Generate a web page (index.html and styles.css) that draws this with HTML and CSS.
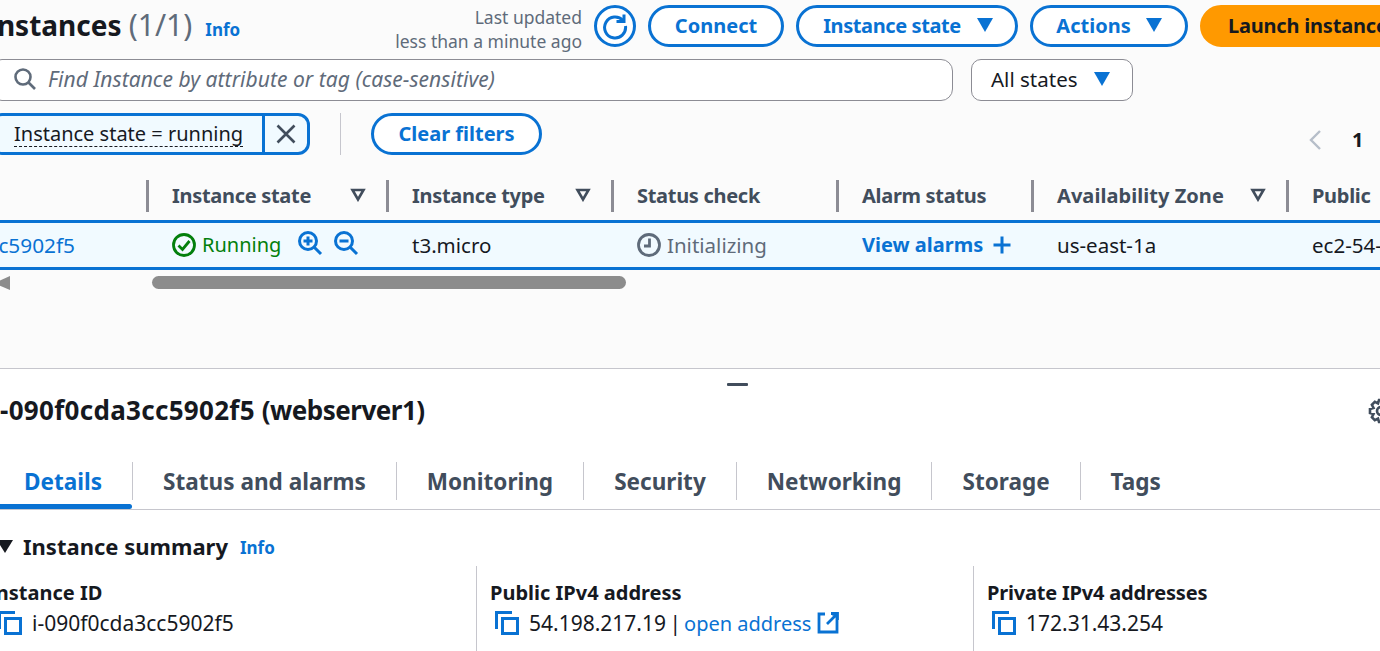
FILE: index.html
```html
<!DOCTYPE html>
<html lang="en">
<head>
<title>Instances</title>
<meta charset="utf-8">
<link rel="stylesheet" href="styles.css">
</head>
<body>
<div class="top">
    <div class="head">
        <h1 class="title">Instances <span class="count">(1/1)</span></h1>
        <a class="info info-head">Info</a>
        <div class="updated">Last updated<br>less than a minute ago</div>
        <button class="btn btn-icon">
            <svg width="28" height="28" viewBox="0 0 28 28" fill="none" stroke="#0972d3" stroke-width="3"><path d="M22 8.5A10.5 10.5 0 1 0 24.5 14"/><path d="M15.5 9.5H23V2.5" stroke-width="3"/></svg>
        </button>
        <button class="btn btn-connect">Connect</button>
        <button class="btn btn-state">Instance state <i class="caret"></i></button>
        <button class="btn btn-actions">Actions <i class="caret"></i></button>
        <button class="btn btn-launch">Launch instances</button>
    </div>

    <div class="search-row">
        <div class="search">
            <svg width="24" height="24" viewBox="0 0 24 24" fill="none" stroke="#5f6b7a" stroke-width="2.6"><circle cx="10" cy="10" r="7.5"/><path d="M15.5 15.5L22 22"/></svg>
            <span>Find Instance by attribute or tag (case-sensitive)</span>
        </div>
        <div class="select">All states <i class="caret"></i></div>
    </div>

    <div class="filter-row">
        <div class="token">
            <span class="token-text"><span class="dashed">Instance state = running</span></span>
            <span class="token-x">
                <svg width="20" height="20" viewBox="0 0 20 20" fill="none" stroke="#414d5c" stroke-width="2.6"><path d="M1.5 1.5L18.5 18.5M18.5 1.5L1.5 18.5"/></svg>
            </span>
        </div>
        <span class="vline"></span>
        <button class="btn btn-clear">Clear filters</button>
        <div class="pager">
            <svg width="14" height="20" viewBox="0 0 14 20" fill="none" stroke="#b6bec9" stroke-width="2.4"><path d="M12 1L3 10L12 19"/></svg>
            <b>1</b>
        </div>
    </div>

    <div class="grid thead">
        <div class="th"></div>
        <div class="th">Instance state
            <svg class="sort" width="16" height="14" viewBox="0 0 16 14" fill="none" stroke="#414d5c" stroke-width="2.6"><path d="M2.500 2H13.500L8 11.500Z"/></svg>
        </div>
        <div class="th">Instance type
            <svg class="sort" width="16" height="14" viewBox="0 0 16 14" fill="none" stroke="#414d5c" stroke-width="2.6"><path d="M2.500 2H13.500L8 11.500Z"/></svg>
        </div>
        <div class="th">Status check</div>
        <div class="th">Alarm status</div>
        <div class="th th-zone">Availability Zone
            <svg class="sort" width="16" height="14" viewBox="0 0 16 14" fill="none" stroke="#414d5c" stroke-width="2.6"><path d="M2.500 2H13.500L8 11.500Z"/></svg>
        </div>
        <div class="th">Public</div>
    </div>
    <div class="grid tr">
        <div class="td td-id"><a>i-090f0cda3cc5902f5</a></div>
        <div class="td running">
            <svg width="24" height="24" viewBox="0 0 24 24" fill="none" stroke="#037f0c" stroke-width="2.800"><circle cx="12" cy="12" r="10.500"/><path d="M6.500 12.500L10.500 16.500L17.500 8"/></svg>
            <span>Running</span>
            <svg class="zoom-in" width="26" height="26" viewBox="0 0 26 26" fill="none" stroke="#0972d3" stroke-width="3"><circle cx="11" cy="11" r="8.500"/><path d="M17.500 17.500L24 24M11 6.500V15.500M6.500 11H15.500"/></svg>
            <svg class="zoom-out" width="26" height="26" viewBox="0 0 26 26" fill="none" stroke="#0972d3" stroke-width="3"><circle cx="11" cy="11" r="8.500"/><path d="M17.500 17.500L24 24M6.500 11H15.500"/></svg>
        </div>
        <div class="td">t3.micro</div>
        <div class="td init">
            <svg width="24" height="24" viewBox="0 0 24 24" fill="none" stroke="#5f6b7a" stroke-width="2.800"><circle cx="12" cy="12" r="10.500"/><path d="M12.500 5.500V13H7"/></svg>
            <span>Initializing</span>
        </div>
        <div class="td alarms">View alarms
            <svg width="20" height="20" viewBox="0 0 20 20" fill="none" stroke="#0972d3" stroke-width="3"><path d="M10 1.500V18.500M1.500 10H18.500"/></svg>
        </div>
        <div class="td">us-east-1a</div>
        <div class="td">ec2-54-198-217-19</div>
    </div>
    <div class="scrollbar">
        <i class="scroll-left"></i>
        <i class="scroll-thumb"></i>
    </div>
</div>

<div class="bottom">
    <div class="handle"></div>
    <div class="detail-head">
        <h2 class="detail-title"><span class="detail-id">i-090f0cda3cc5902f5</span> <span class="detail-name">(webserver1)</span></h2>
        <svg class="gear" width="26" height="26" viewBox="0 0 26 26" fill="none" stroke="#414d5c" stroke-width="2.600"><circle cx="13" cy="13" r="4"/><path d="M11 2h4l1 3.500 3.200-1.600 2.900 2.900L20.500 10 24 11v4l-3.500 1 1.600 3.200-2.900 2.900L16 20.500 15 24h-4l-1-3.500-3.200 1.600-2.900-2.900L5.500 16 2 15v-4l3.500-1-1.600-3.200 2.900-2.900L10 5.500z"/></svg>
    </div>
    <div class="tabs">
        <a class="tab tab-active">Details</a>
        <a class="tab">Status and alarms</a>
        <a class="tab">Monitoring</a>
        <a class="tab">Security</a>
        <a class="tab">Networking</a>
        <a class="tab">Storage</a>
        <a class="tab">Tags</a>
    </div>
    <div class="summary-head">
        <i class="summary-caret"></i>
        <h3>Instance summary</h3>
        <a class="info">Info</a>
    </div>
    <div class="cols">
        <div class="col">
            <div class="label">Instance ID</div>
            <div class="value">
                <svg class="copy" width="24" height="24" viewBox="0 0 24 24" fill="none" stroke="#0972d3" stroke-width="3"><path d="M1.500 18V1.500H17"/><rect x="7.500" y="7.500" width="15" height="15"/></svg>
                <span>i-090f0cda3cc5902f5</span>
            </div>
        </div>
        <div class="col">
            <div class="label">Public IPv4 address</div>
            <div class="value">
                <svg class="copy" width="24" height="24" viewBox="0 0 24 24" fill="none" stroke="#0972d3" stroke-width="3"><path d="M1.500 18V1.500H17"/><rect x="7.500" y="7.500" width="15" height="15"/></svg>
                <span class="ip">54.198.217.19 |</span>
                <a class="link">open address</a>
                <svg class="ext" width="22" height="22" viewBox="0 0 22 22" fill="none" stroke="#0972d3" stroke-width="2.800"><path d="M8 2H2V20H20V2H15M20 2L10 12M14 1.500H20.500V8"/></svg>
            </div>
        </div>
        <div class="col col-private">
            <div class="label">Private IPv4 addresses</div>
            <div class="value">
                <svg class="copy" width="24" height="24" viewBox="0 0 24 24" fill="none" stroke="#0972d3" stroke-width="3"><path d="M1.500 18V1.500H17"/><rect x="7.500" y="7.500" width="15" height="15"/></svg>
                <span>172.31.43.254</span>
            </div>
        </div>
    </div>
</div>
</body>
</html>
```

FILE: styles.css
```css
html,body{margin: 0;padding: 0;}
body{width: 1380px;height: 651px;overflow: hidden;font-family: "Noto Sans","Liberation Sans",sans-serif;font-size: 20px;color: #16191f;background: #fff;}
h1,h2,h3{margin: 0;}
a{color: #0972d3;}
button{font-family: inherit;cursor: pointer;}

.top{height: 368px;background: #fbfbfb;border-bottom: 1px solid #c6c6cd;}

.head{height: 42px;padding-top: 5px;display: flex;align-items: center;white-space: nowrap;}
.title{font-size: 28px;font-weight: 700;margin: -3px 0 0 -14px;}
.count{font-size: 30px;font-weight: 400;color: #5f6b7a;}
.info{font-size: 17px;font-weight: 700;}
.info-head{margin: 6px 0 0 13px;}
.updated{margin: 6px 12px 0 auto;font-size: 17.500px;line-height: 24px;color: #5f6b7a;text-align: right;}

.btn{height: 42px;box-sizing: border-box;border: 3px solid #0972d3;border-radius: 21px;background: #fff;color: #0972d3;font-size: 20px;font-weight: 700;padding: 0 0 2px;display: flex;align-items: center;justify-content: center;flex: none;}
.btn-icon{width: 42px;margin-right: 12px;padding: 0;}
.btn-connect{width: 136px;margin-right: 12px;}
.btn-state{width: 222px;margin-right: 12px;letter-spacing: -0.400px;padding-left: 2px;}
.btn-state .caret{margin-left: 16px;}
.btn-actions{width: 158px;margin-right: 12px;}
.btn-launch{width: 210px;margin-right: -30px;background: #f90;border-color: #f90;color: #16191f;justify-content: flex-start;padding-left: 25px;letter-spacing: -0.200px;}
.btn-clear{width: 171px;}
.caret{display: inline-block;width: 0;height: 0;border-left: 8.500px solid transparent;border-right: 8.500px solid transparent;border-top: 14px solid #0972d3;margin-left: 15px;}

.search-row{display: flex;height: 42px;margin-top: 12px;}
.search{width: 963px;margin-left: -10px;box-sizing: border-box;border: 1px solid #8c8c94;border-radius: 12px;background: #fff;display: flex;align-items: center;padding: 0 0 2px 22px;font-size: 21px;font-style: italic;color: #5f6b7a;}
.search span{margin-left: 11px;letter-spacing: 0.050px;}
.select{width: 162px;margin-left: 18px;box-sizing: border-box;border: 1px solid #8c8c94;border-radius: 10px;background: #fff;display: flex;align-items: center;padding: 0 0 2px 19px;font-size: 20.500px;}
.select .caret{margin-left: 16px;}

.filter-row{display: flex;align-items: center;height: 42px;margin-top: 12px;position: relative;}
.token{display: flex;height: 42px;width: 320px;margin-left: -10px;box-sizing: border-box;border: 3px solid #0972d3;border-radius: 12px;background: #f1faff;}
.token-text{flex: 1;padding-left: 21px;display: flex;align-items: center;}
.dashed{border-bottom: 1px dashed #16191f;line-height: 24px;}
.token-x{width: 42px;border-left: 3px solid #0972d3;display: flex;align-items: center;justify-content: center;}
.vline{width: 1px;height: 42px;background: #c6c6cd;margin-left: 30px;}
.btn-clear{margin-left: 30px;}
.pager{position: absolute;left: 1308px;top: 13px;display: flex;align-items: center;gap: 30px;}

.grid{display: grid;grid-template-columns: 146px 240px 225px 225px 195px 255px 94px;}
.thead{height: 32px;margin-top: 25px;}
.th{display: flex;align-items: center;justify-content: space-between;padding: 0 20px 2px 23px;border-left: 3px solid #8c8c94;font-weight: 700;color: #414d5c;white-space: nowrap;letter-spacing: -0.300px;}
.th:first-child{border-left: none;}
.th-zone{letter-spacing: 0.050px;}
.tr{height: 50px;margin-top: 8px;box-sizing: border-box;border-top: 3px solid #0972d3;border-bottom: 3px solid #0972d3;background: #f1faff;}
.td{display: flex;align-items: center;padding: 0 0 1px 26px;font-size: 20.500px;white-space: nowrap;overflow: hidden;}
.td-id{padding: 0 71px 1px 0;justify-content: flex-end;overflow: visible;font-size: 20.800px;}
.running{color: #037f0c;font-size: 20px;}
.running span{margin-left: 6px;}
.zoom-in{margin-left: 16px;margin-top: -3px;}
.zoom-out{margin-left: 10px;margin-top: -3px;}
.init{color: #5f6b7a;}
.init span{margin-left: 6px;}
.alarms{color: #0972d3;font-size: 20px;font-weight: 700;gap: 9px;}

.scrollbar{height: 13px;margin-top: 6px;position: relative;}
.scroll-left{position: absolute;left: -6px;top: 0;width: 0;height: 0;border-top: 7px solid transparent;border-bottom: 7px solid transparent;border-right: 16px solid #8c8c8c;}
.scroll-thumb{position: absolute;left: 152px;top: 0;width: 474px;height: 13px;border-radius: 7px;background: #8c8c8c;}

.bottom{position: relative;}
.handle{position: absolute;left: 727px;top: 14px;width: 21px;height: 3px;background: #414d5c;border-radius: 1px;}
.detail-head{height: 40px;padding-top: 21px;display: flex;align-items: center;}
.detail-title{font-size: 26px;font-weight: 700;margin-left: -8px;white-space: nowrap;}
.detail-id{letter-spacing: 0.300px;}
.detail-name{letter-spacing: -0.500px;}
.gear{position: absolute;left: 1368px;top: 29px;}

.tabs{display: flex;height: 47px;margin-top: 32px;border-bottom: 1px solid #c6c6cd;}
.tab{height: 38px;display: flex;align-items: center;padding: 0 30px;border-left: 1px solid #c6c6cd;font-size: 22.550px;font-weight: 700;color: #414d5c;white-space: nowrap;}
.tab-active{margin-left: -6px;border-left: none;color: #0972d3;position: relative;}
.tab-active:after{content: "";position: absolute;left: 0;right: 0;top: 42px;height: 5px;background: #0972d3;border-radius: 0 3px 3px 0;}

.summary-head{display: flex;align-items: center;height: 32px;margin-top: 20px;}
.summary-head h3{font-size: 22px;font-weight: 700;margin: 0 12px 0 10px;}
.summary-head .info{margin-top: 3px;}
.summary-caret{margin-left: -3px;width: 0;height: 0;border-left: 8px solid transparent;border-right: 8px solid transparent;border-top: 13px solid #16191f;}

.cols{display: flex;margin-top: 4px;}
.col{height: 90px;flex: none;box-sizing: border-box;padding: 14px 0 0 13px;border-left: 1px solid #c6c6cd;width: 497px;white-space: nowrap;}
.col:first-child{border-left: none;width: 476px;padding-left: 0;}
.col:first-child .label{margin-left: -12px;}
.col-private .label{letter-spacing: -0.200px;}
.label{font-weight: 700;line-height: 26px;}
.value{display: flex;align-items: center;height: 30px;margin-top: 2px;font-size: 21px;}
.copy{margin: 0 10px 0 5px;flex: none;}
.col:first-child .copy{margin: 0 10px 0 -2px;}
.ip{word-spacing: -2px;}
.link{margin-left: 3px;font-size: 20px;}
.ext{margin-left: 6px;}
```
